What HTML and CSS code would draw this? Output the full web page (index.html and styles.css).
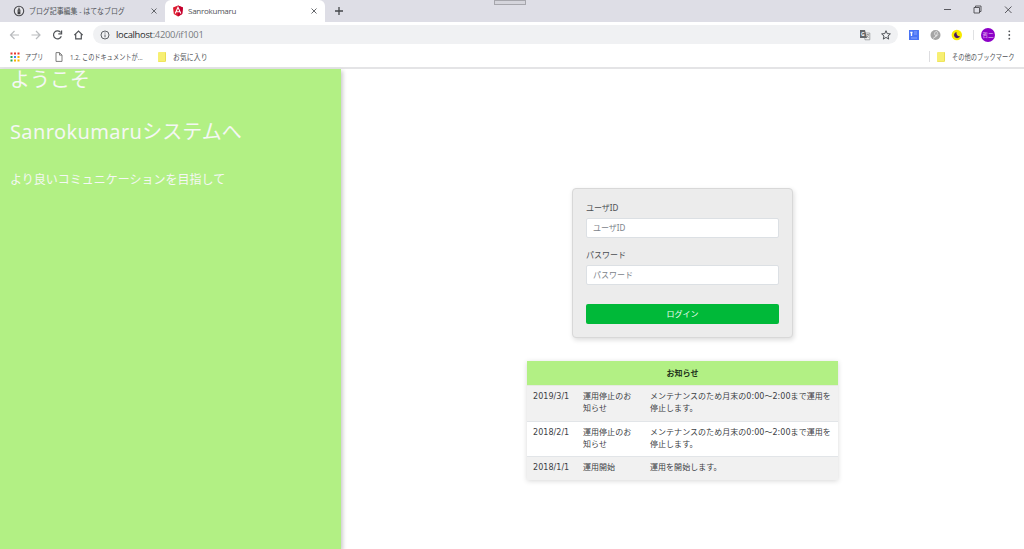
FILE: index.html
```html
<!DOCTYPE html>
<html lang="ja">
<head>
<meta charset="utf-8">
<title>Sanrokumaru</title>
<link rel="stylesheet" href="styles.css">
</head>
<body>
<header class="browser">
  <div class="tabs">
    <div class="tab tab-first">
      <svg class="fav" viewBox="0 0 12 12"><circle cx="6" cy="6" r="4.7" fill="#e4e4e8" stroke="#4b4b50" stroke-width="1.1"/><path d="M6 2L7.4 5V9.2H4.6V5Z" fill="#3c3c40"/><path d="M6 3V7" stroke="#ddd" stroke-width=".4"/></svg>
      <span class="label"><span class="narrow tab-title">ブログ記事編集 - はてなブログ</span></span>
      <svg class="close" viewBox="0 0 8 8"><path d="M1.5 1.5L6.5 6.5M6.5 1.5L1.5 6.5"/></svg>
    </div>
    <div class="tab tab-active">
      <svg class="fav" viewBox="0 0 12 12"><path d="M6 .6L11 2.4L10.2 9L6 11.5L1.8 9L1 2.4Z" fill="#dd1b2f"/><path d="M6 .6L11 2.4L10.2 9L6 11.5Z" fill="#c3002f"/><path d="M3.2 8.5L6 2.3L8.8 8.5M4.3 6.8H7.7" fill="none" stroke="#fff" stroke-width="1.1"/></svg>
      <span class="label active-title">Sanrokumaru</span>
      <svg class="close" viewBox="0 0 8 8"><path d="M1.5 1.5L6.5 6.5M6.5 1.5L1.5 6.5"/></svg>
    </div>
    <svg class="plus" viewBox="0 0 10 10"><path d="M5 1V9M1 5H9"/></svg>
    <div class="handle"></div>
    <svg class="window-buttons" viewBox="0 0 76 20"><path d="M4 9.500H11M34 7.500H39.500V13H34ZM35.500 7.500V6H41V11.500H39.500M65 6.500L71.500 13M71.500 6.500L65 13"/></svg>
  </div>
  <div class="toolbar">
    <svg class="nav" viewBox="0 0 90 24"><g fill="none" stroke-width="1.2"><path stroke="#b9bbbe" d="M19 12H10.5M14.5 8L10.5 12L14.5 16M31.500 12H40M36 8L40 12L36 16"/><path stroke="#505357" d="M60.800 9.500A4 4 0 1 0 61.300 13.200M61.600 7.500V10.800H58.300M74.300 12.200L78.500 8L82.700 12.200M75.700 11.200V15.800H81.300V11.200"/></g></svg>
    <div class="address">
      <svg class="info" viewBox="0 0 10 10"><circle cx="5" cy="5" r="4" fill="none" stroke="#5f6368"/><path d="M5 4.500V7.300M5 2.500V3.500" stroke="#5f6368"/></svg>
      <span class="url"><b>localhost</b>:4200/if1001</span>
      <svg class="translate" viewBox="0 0 12 12"><path d="M5 4H10.800V10.800H6Z" fill="#f5f5f5" stroke="#85888c" stroke-width=".7"/><path d="M1 1H6L8 9H1Z" fill="#63676c"/><text x="2" y="6.800" class="translate-g">G</text><path d="M7.300 5.700H10M8.700 5V6M9.500 5.700C9 7.500 8.300 8.200 7.500 8.800M7.800 7L9.700 9" fill="none" stroke="#777" stroke-width=".6"/></svg>
      <svg class="star" viewBox="0 0 12 12"><path d="M6 1.700L7.200 4.600L10.400 4.900L8 7L8.700 10.100L6 8.400L3.300 10.100L4 7L1.600 4.900L4.800 4.600Z" fill="none" stroke="#4e5257"/></svg>
    </div>
    <svg class="extensions" viewBox="0 0 120 24">
      <rect x="5" y="7" width="10" height="10" fill="#4a74f5"/><path d="M7.500 9V13M6.300 9.500H8.500" stroke="#fff" stroke-width="1.300"/><path d="M10 9H13M10 11H13M7 15H13" stroke="#9db3ff" stroke-width=".8"/>
      <circle cx="31.500" cy="12" r="5" fill="#a5a5a5"/><path d="M29 15.500C33 13 34.500 9 32.500 8.500C30 8.500 30 13 32.500 12.500M31 14.500L34 11.500" fill="none" stroke="#eee" stroke-width=".8"/>
      <circle cx="52.800" cy="12" r="5.200" fill="#f7e900"/><path d="M52.500 9A3.100 3.100 0 1 0 56 13.200C53.500 13.500 52.200 11.500 52.500 9Z" fill="#4b1766"/>
      <path d="M69.500 7V17" stroke="#e0e1e3"/><circle cx="84" cy="12" r="7" fill="#8c00c7"/><text x="84" y="14.200" class="avatar">哲二</text>
      <g fill="#505357"><circle cx="105.300" cy="8.300" r=".9"/><circle cx="105.300" cy="12" r=".9"/><circle cx="105.300" cy="15.700" r=".9"/></g>
    </svg>
  </div>
  <div class="bookmarks">
    <svg class="apps" viewBox="0 0 10 10"><path d="M.5 1.500H2.500M4 1.500H6M7.500 1.500H9.500" stroke="#e8372c" stroke-width="2"/><path d="M.5 5H2.500M.5 8.500H2.500" stroke="#23a455" stroke-width="2"/><path d="M4 5H6" stroke="#4285f4" stroke-width="2"/><path d="M7.500 5H9.500M4 8.500H6M7.500 8.500H9.500" stroke="#f6b400" stroke-width="2"/></svg>
    <span class="bm bm-apps"><span class="narrow">アプリ</span></span>
    <svg class="doc" viewBox="0 0 8 10"><path d="M1 .6H4.500L7 3.100V9.400H1ZM4.500 .6V3.100H7" fill="#fff" stroke="#707070" stroke-width=".9"/></svg>
    <span class="bm bm-doc"><span class="narrow">1.2. このドキュメントが...</span></span>
    <i class="folder"></i>
    <span class="bm bm-fav"><span class="narrow">お気に入り</span></span>
    <span class="divider"></span>
    <i class="folder"></i>
    <span class="bm bm-other"><span class="narrow">その他のブックマーク</span></span>
  </div>
</header>
<main class="page">
  <aside class="welcome">
    <h1>ようこそ</h1>
    <h1 class="system"><span class="latin">Sanrokumaru</span>システムへ</h1>
    <p>より良いコミュニケーションを目指して</p>
  </aside>
  <section class="content">
    <form class="login">
      <label for="user">ユーザID</label>
      <input id="user" type="text" placeholder="ユーザID">
      <label for="pass">パスワード</label>
      <input id="pass" type="password" placeholder="パスワード">
      <button type="button">ログイン</button>
    </form>
    <table class="news">
      <colgroup><col class="date"><col class="subject"><col></colgroup>
      <thead><tr><th colspan="3">お知らせ</th></tr></thead>
      <tbody>
        <tr><td>2019/3/1</td><td>運用停止のお<br>知らせ</td><td>メンテナンスのため月末の0:00～2:00まで運用を<br>停止します。</td></tr>
        <tr><td>2018/2/1</td><td>運用停止のお<br>知らせ</td><td>メンテナンスのため月末の0:00～2:00まで運用を<br>停止します。</td></tr>
        <tr><td>2018/1/1</td><td>運用開始</td><td>運用を開始します。</td></tr>
      </tbody>
    </table>
  </section>
</main>
</body>
</html>
```
FILE: styles.css
```css
* { box-sizing: border-box; }
body { margin: 0; height: 549px; overflow: hidden; display: flex; flex-direction: column; background: #fff; color: #212529; font-family: "Noto Sans", "Noto Sans CJK JP", sans-serif; font-size: 8px; line-height: 12px; }
svg { display: block; flex: none; }
.browser { flex: none; height: 69px; border-bottom: 2px solid #e4e4e6; color: #505357; font-family: "Open Sans", "Noto Sans CJK JP", sans-serif; }
.narrow { display: inline-block; white-space: nowrap; transform-origin: left center; transform: scaleX(.865); }
.tabs { height: 22px; background: #dedee6; display: flex; position: relative; }
.tab { display: flex; align-items: center; height: 22px; }
.tab-first { width: 165px; padding-left: 13px; }
.tab-active { width: 160px; padding-left: 7px; background: #fff; border-radius: 6px 6px 0 0; }
.fav { width: 12px; height: 12px; margin-right: 4px; }
.label { width: 121px; white-space: nowrap; overflow: hidden; }
.tab-active .label { width: 122px; }
.active-title { font-size: 8px; letter-spacing: -.25px; }
.close { width: 8px; height: 8px; stroke: #55585c; stroke-width: .9; }
.plus { width: 10px; height: 10px; margin: 6px 0 0 9px; stroke: #44474b; stroke-width: 1.3; }
.handle { position: absolute; left: 494px; top: 0; width: 32px; height: 5px; border: 1px solid #a6a6ac; background: #d5d5dc; }
.window-buttons { width: 76px; height: 20px; margin-left: auto; margin-right: 8px; fill: none; stroke: #4a4a4f; stroke-width: .9; }
.toolbar { height: 25px; display: flex; align-items: center; }
.nav { width: 90px; height: 24px; }
.address { width: 805px; height: 19px; margin-left: 3px; border-radius: 10px; background: #f0f1f3; display: flex; align-items: center; padding: 0 6px 0 7px; }
.info { width: 10px; height: 10px; margin-right: 6px; }
.url { font-size: 9.4px; color: #777b80; letter-spacing: -.29px; }
.url b { color: #292b2e; font-weight: 400; }
.translate { width: 12px; height: 12px; margin-left: auto; margin-right: 9px; }
.translate-g { fill: #fff; font-size: 5px; font-weight: 700; }
.star { width: 12px; height: 12px; }
.extensions { width: 120px; height: 24px; margin-left: 6px; }
.avatar { fill: #f1d9fa; font-size: 5.6px; text-anchor: middle; }
.bookmarks { height: 19px; padding: 0 3px 0 10px; display: flex; align-items: center; }
.bm { white-space: nowrap; }
.apps { width: 10px; height: 10px; margin-right: 5px; }
.bm-apps { width: 30px; }
.bm-apps .narrow { transform: scaleX(.76); }
.doc { width: 8px; height: 10px; margin-right: 7px; }
.bm-doc { width: 88px; }
.bm-doc .narrow { transform: scaleX(.775); }
.folder { flex: none; width: 8px; height: 10px; background: #f7ef72; border-right: 1px solid #e9dd51; border-bottom: 1px solid #f0e65d; border-radius: 1px; }
.bm-fav { margin-left: 7px; }
.divider { width: 1px; height: 11px; margin-left: auto; margin-right: 7px; background: #dddde0; }
.bm-other { margin-left: 7px; width: 69px; }
.bm-other .narrow { transform: scaleX(.78); }
.page { flex: 1; min-height: 0; display: grid; grid-template-columns: 341px 1fr; }
.welcome { background: #b2f084; color: #f5f7f5; padding-left: 10px; box-shadow: 2px 2px 4px rgba(0,0,0,.2); }
.welcome h1 { margin: 0; font-size: 20px; font-weight: 400; line-height: 22px; }
.welcome .system { margin-top: 30px; white-space: nowrap; }
.latin { letter-spacing: .38px; }
.welcome p { margin: 28px 0 0; font-size: 12px; line-height: 18px; }
.content { display: flex; flex-direction: column; align-items: center; padding-top: 119px; }
.login { width: 221px; height: 150px; padding: 13px; border: 1px solid #d8d8d8; border-radius: 4px; background: #ececec; box-shadow: 1px 2px 5px rgba(0,0,0,.14); color: #4b4e52; display: flex; flex-direction: column; }
.login label { height: 12px; margin-bottom: 4px; }
.login input { height: 20px; width: 100%; margin: 0 0 11px; padding: 0 6px 1px; border: 1px solid #dce0e4; border-radius: 2px; background: #fff; font: inherit; }
.login input::placeholder { color: #7c838a; opacity: 1; }
.login button { height: 20px; width: 100%; margin: 8px 0 0; padding: 0 0 1px; border: 0; border-radius: 2px; background: #00b939; color: #f1fff4; font: inherit; }
.news { width: 311px; margin-top: 23px; table-layout: fixed; border-collapse: separate; border-spacing: 0; box-shadow: 0 1px 5px rgba(0,0,0,.16); color: #3c4044; font-family: "DejaVu Sans", "Noto Sans CJK JP", sans-serif; letter-spacing: .04px; }
.date { width: 50px; }
.subject { width: 67px; }
.news th { height: 24px; padding: 0 0 1px; background: #b2f084; color: #25351c; font-family: "Noto Sans", "Noto Sans CJK JP", sans-serif; font-weight: 700; text-align: center; }
.news td { padding: 5px 0 5.600px 6px; vertical-align: top; white-space: nowrap; border-top: 1px solid #e2e5e8; }
.news tbody tr:nth-child(odd) { background: #f1f1f1; }
.news tbody tr:first-child td { border-top-color: #e4eadf; }
```
